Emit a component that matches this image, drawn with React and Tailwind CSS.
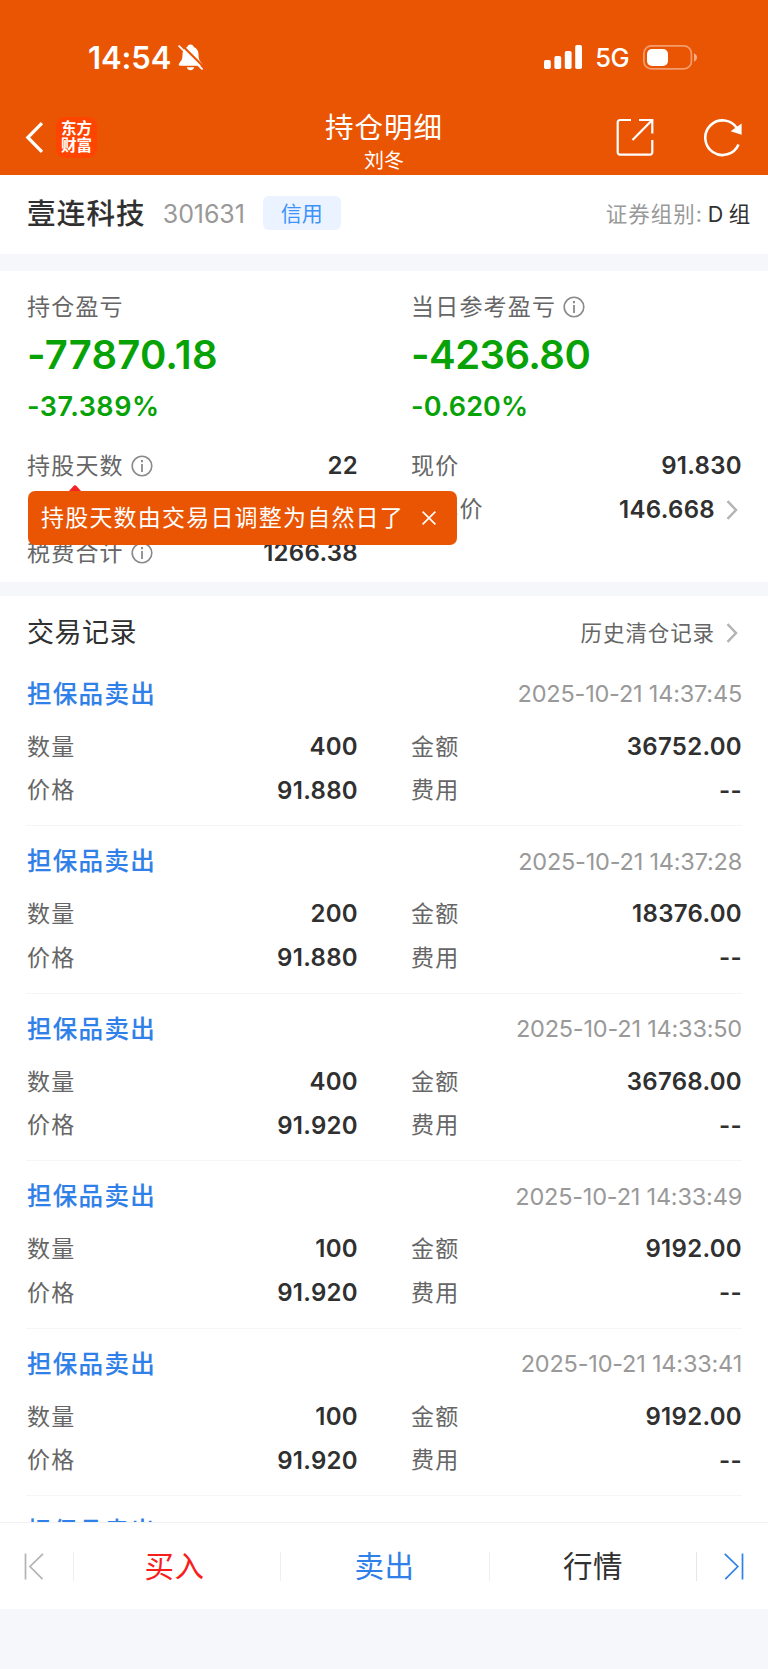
import React, { useState } from 'react';

const records = [
  { id: 1, type: '担保品卖出', time: '2025-10-21 14:37:45', quantity: '400', price: '91.880', amount: '36752.00', fee: '--' },
  { id: 2, type: '担保品卖出', time: '2025-10-21 14:37:28', quantity: '200', price: '91.880', amount: '18376.00', fee: '--' },
  { id: 3, type: '担保品卖出', time: '2025-10-21 14:33:50', quantity: '400', price: '91.920', amount: '36768.00', fee: '--' },
  { id: 4, type: '担保品卖出', time: '2025-10-21 14:33:49', quantity: '100', price: '91.920', amount: '9192.00', fee: '--' },
  { id: 5, type: '担保品卖出', time: '2025-10-21 14:33:41', quantity: '100', price: '91.920', amount: '9192.00', fee: '--' },
  { id: 6, type: '担保品卖出' },
];

const InfoIcon = () => (
  <svg className="ml-[7px] h-[22px] w-[22px] shrink-0" viewBox="0 0 22 22" fill="none" stroke="#8a8a8a">
    <circle cx="11" cy="11" r="9.8" strokeWidth="1.6" />
    <path d="M11 9v8" strokeWidth="1.8" />
    <path d="M11 5v2.200" strokeWidth="2" />
  </svg>
);

const ChevronIcon = () => (
  <svg className="ml-[11px] mr-1 h-5 w-3 shrink-0" viewBox="0 0 12 20" fill="none" stroke="#b4b4b4" strokeWidth="2.500">
    <path d="M1.500 1.200L10 10l-8.500 8.800" />
  </svg>
);

const StatusBar = () => (
  <div className="flex h-[104px] items-start pl-[88px] pr-[70px] pt-[37px]">
    <div className="flex h-10 items-center">
      <span className="pt-px text-[31px] font-semibold leading-10 tracking-[-0.1px]">14:54</span>
      <svg className="ml-[7px] h-[27px] w-[25px]" viewBox="0 0 25 27" fill="none">
        <path
          d="M12.5 0.5c-1.8 0-3 1-3.3 2.4C5.900 4.200 4.500 7 4.500 10.500c0 4.600-1.100 6.300-3 8.400-1.400 1.600-.8 2.800.8 2.800h20.400c1.600 0 2.200-1.200.8-2.800-1.900-2.100-3-3.800-3-8.400 0-3.500-1.400-6.300-4.700-7.600C15.500 1.500 14.300.5 12.500.5z"
          fill="#fff"
        />
        <path d="M8.800 23.300h7.400c-.5 1.900-1.900 3-3.700 3s-3.200-1.100-3.700-3z" fill="#fff" />
        <path d="M3.200 0.500L26 23.200" stroke="#ea5504" strokeWidth="2.200" />
        <path d="M1.200 2.200L24 24.900" stroke="#fff" strokeWidth="1.900" strokeLinecap="round" />
      </svg>
    </div>
    <div className="ml-auto flex h-10 items-center">
      <svg className="h-6 w-[39px]" viewBox="0 0 39 24" fill="#fff">
        <rect x="0" y="15" width="6.800" height="9" rx="1.800" />
        <rect x="10.400" y="11" width="6.800" height="13" rx="1.800" />
        <rect x="20.800" y="6" width="6.800" height="18" rx="1.800" />
        <rect x="31.200" y="0" width="6.800" height="24" rx="1.800" />
      </svg>
      <span className="ml-3 pt-px text-[25.5px] font-medium leading-10 tracking-[-0.5px]">5G</span>
      <svg className="ml-[14px] h-[25px] w-[55px]" viewBox="0 0 55 25" fill="none">
        <rect x="0.9" y="0.9" width="47.500" height="23" rx="7.500" stroke="#fff" strokeOpacity="0.42" strokeWidth="1.700" />
        <rect x="4" y="4" width="21" height="17" rx="5" fill="#fff" />
        <path d="M51 8.200c1.900.7 3 2.300 3 4.200s-1.100 3.500-3 4.200z" fill="#fff" fillOpacity="0.5" />
      </svg>
    </div>
  </div>
);

const NavBar = () => (
  <div className="grid h-[71px] grid-cols-[1fr_auto_1fr]">
    <div className="flex h-[66px] items-center pl-[25px]">
      <svg className="h-[31px] w-[19px]" viewBox="0 0 19 31" fill="none" stroke="#fff" strokeWidth="3.200">
        <path d="M17 1.200L2.800 15.500 17 29.800" />
      </svg>
      <div className="ml-3 flex h-[41px] w-[41px] flex-col items-center justify-center rounded-[9px] bg-[#ff4400] text-[15.5px] font-bold leading-[17px]">
        <span>东方</span>
        <span>财富</span>
      </div>
    </div>
    <div className="flex flex-col items-center pt-1">
      <h1 className="text-[28.5px] leading-10 tracking-[1px]">持仓明细</h1>
      <p className="text-[20px] leading-[26px]">刘冬</p>
    </div>
    <div className="flex h-[66px] items-center justify-end pr-[26px]">
      <svg className="h-[38px] w-[38px]" viewBox="0 0 38 38" fill="none" stroke="#fff" strokeWidth="2.200">
        <path d="M15 2H4a2.300 2.300 0 0 0-2.300 2.300v30A2.300 2.300 0 0 0 4 36.600h30a2.300 2.300 0 0 0 2.300-2.300V22" />
        <path d="M23 2h13.300v13.500" />
        <path d="M36 2.300L16.500 22" />
      </svg>
      <svg className="ml-[49px] h-[39px] w-[39px]" viewBox="0 0 39 39" fill="none">
        <path d="M35.500 26.500A17.300 17.300 0 1 1 34.200 10.500" stroke="#fff" strokeWidth="2.600" />
        <path d="M38.600 5.500v11.300l-11-3.600z" fill="#fff" />
      </svg>
    </div>
  </div>
);

const Field = ({ label, value, info, link }) => (
  <div className="flex h-[43.75px] items-center">
    <span className="ml-px text-[23px] tracking-[1.2px] text-[#666]">{label}</span>
    {info && <InfoIcon />}
    {value && <span className="ml-auto text-[24px] font-semibold tracking-[0.3px] text-[#303030]">{value}</span>}
    {link && <ChevronIcon />}
  </div>
);

const Profit = ({ label, value, percent, valueClass, percentClass, info }) => (
  <div className="pl-px">
    <div className="flex h-8 items-center">
      <span className="text-[23px] tracking-[1.2px] text-[#666]">{label}</span>
      {info && <InfoIcon />}
    </div>
    <div className={`mt-1 flex h-14 items-center text-[40px] font-semibold text-[#06a206] ${valueClass}`}>{value}</div>
    <div className={`mt-1 flex h-10 items-center text-[27px] font-semibold text-[#06a206] ${percentClass}`}>{percent}</div>
  </div>
);

const Record = ({ record }) => (
  <div className="h-[167.5px] shrink-0 border-b-[1.5px] border-[#f5f6f7] pt-[13.5px]">
    <div className="flex h-11 items-center justify-between">
      <span className="ml-px text-[24.5px] font-medium tracking-[1.3px] text-[#2f80e8] [-webkit-text-stroke:0.1px_#2f80e8]">
        {record.type}
      </span>
      <span className="text-[23.5px] tracking-[-0.2px] text-[#999]">{record.time}</span>
    </div>
    {record.quantity && (
      <div className="mt-[9px] grid grid-cols-2 gap-x-[52px]">
        <Field label="数量" value={record.quantity} />
        <Field label="金额" value={record.amount} />
        <Field label="价格" value={record.price} />
        <Field label="费用" value={record.fee} />
      </div>
    )}
  </div>
);

const Footer = () => (
  <div className="h-[147px] shrink-0 bg-[#f6f7fa]">
    <div className="flex h-[87px] items-center border-t border-[#f0f1f2] bg-white text-[29.5px] tracking-[0.5px]">
      <div className="flex w-[73px] pl-6">
        <svg className="h-[27px] w-5" viewBox="0 0 20 27" fill="none" stroke="#b3b3b3" strokeWidth="1.700">
          <path d="M1.500 0.500v26M19 0.800L6 13.500 18.500 26.200" />
        </svg>
      </div>
      <div className="flex h-[29px] w-[207px] items-center justify-center border-l border-[#eeeff0] pr-[5px] text-[#f91d1d]">买入</div>
      <div className="flex h-[29px] w-[209px] items-center justify-center border-l border-[#eeeff0] pr-px text-[#2f80e8]">卖出</div>
      <div className="flex h-[29px] w-[207px] items-center justify-center border-l border-[#eeeff0] text-[#303030]">行情</div>
      <div className="flex h-[29px] flex-1 items-center border-l border-[#e6e7e8] pl-[27px]">
        <svg className="h-[27px] w-5" viewBox="0 0 20 27" fill="none" stroke="#2f80e8" strokeWidth="1.700">
          <path d="M18.500 0.500v26M0.800 0.800L13.800 13.500 1.300 26.200" />
        </svg>
      </div>
    </div>
  </div>
);

const App = () => {
  const [showTip, setShowTip] = useState(true);

  return (
    <div className="flex h-[1669px] w-[768px] flex-col overflow-hidden bg-white font-['Inter','Noto_Sans_CJK_SC',sans-serif] whitespace-nowrap">
      <header className="h-[175px] shrink-0 bg-[#ea5504] text-white">
        <StatusBar />
        <NavBar />
      </header>

      {/* Stock name */}
      <div className="flex h-[79px] shrink-0 items-center pl-[27px] pr-[18px]">
        <span className="text-[28.5px] font-medium tracking-[1.2px] text-[#303030] [-webkit-text-stroke:0.1px_#303030]">壹连科技</span>
        <span className="ml-[17px] text-[25px] tracking-[-0.1px] text-[#999]">301631</span>
        <span className="mb-[3px] ml-[18px] flex h-[34px] w-[78px] items-center justify-center rounded-md bg-[#eaf3ff] pt-0.5 text-[21px] text-[#3d93fb]">
          信用
        </span>
        <span className="ml-auto text-[21.5px] tracking-[1px] text-[#999]">证券组别:</span>
        <span className="ml-[5px] text-[21.5px] tracking-[-0.3px] text-[#303030]">D 组</span>
      </div>

      {/* Position summary */}
      <div className="relative h-[342px] shrink-0 border-t-[17px] border-b-[14px] border-[#f6f7fa] px-[26px] pt-5">
        <div className="grid grid-cols-2 gap-x-[52px]">
          <Profit
            label="持仓盈亏"
            value="-77870.18"
            percent="-37.389%"
            valueClass="tracking-[0.2px]"
            percentClass="tracking-[0.5px]"
          />
          <Profit
            label="当日参考盈亏"
            value="-4236.80"
            percent="-0.620%"
            valueClass="tracking-[-0.55px]"
            percentClass="tracking-[0.1px]"
            info
          />
        </div>
        <div className="mt-[17px] grid grid-cols-2 gap-x-[52px]">
          <Field label="持股天数" value="22" info />
          <Field label="现价" value="91.830" />
          <Field label="个股仓位" />
          <Field label="成本价" value="146.668" link />
          <Field label="税费合计" value="1266.38" info />
        </div>

        {showTip && (
          <div className="absolute left-7 top-[220px] flex h-[54px] w-[429px] items-center rounded-[7px] bg-[#ea5504] pl-[13px] text-white">
            <svg className="absolute -top-1.5 left-[41px] h-1.5 w-3" viewBox="0 0 12 6" fill="#f52222">
              <path d="M0 6L5 .6q1-.9 2 0L12 6z" />
            </svg>
            <span className="pt-px text-[23px] tracking-[1.2px]">持股天数由交易日调整为自然日了</span>
            <button className="absolute right-[21px]" onClick={() => setShowTip(false)}>
              <svg className="h-[14px] w-[14px]" viewBox="0 0 14 14" fill="none" stroke="#fff" strokeWidth="1.600">
                <path d="M.6.6l12.800 12.800M13.400.6L.6 13.400" />
              </svg>
            </button>
          </div>
        )}
      </div>

      {/* Trade records */}
      <div className="flex min-h-0 flex-1 flex-col overflow-hidden px-[26px]">
        <div className="flex h-[62.5px] shrink-0 items-center pt-3">
          <h2 className="ml-px text-[27px] tracking-[0.5px] text-[#303030]">交易记录</h2>
          <span className="ml-auto text-[21.5px] tracking-[0.9px] text-[#666]">历史清仓记录</span>
          <ChevronIcon />
        </div>
        {records.map((record) => (
          <Record key={record.id} record={record} />
        ))}
      </div>

      <Footer />
    </div>
  );
};

export default App;
